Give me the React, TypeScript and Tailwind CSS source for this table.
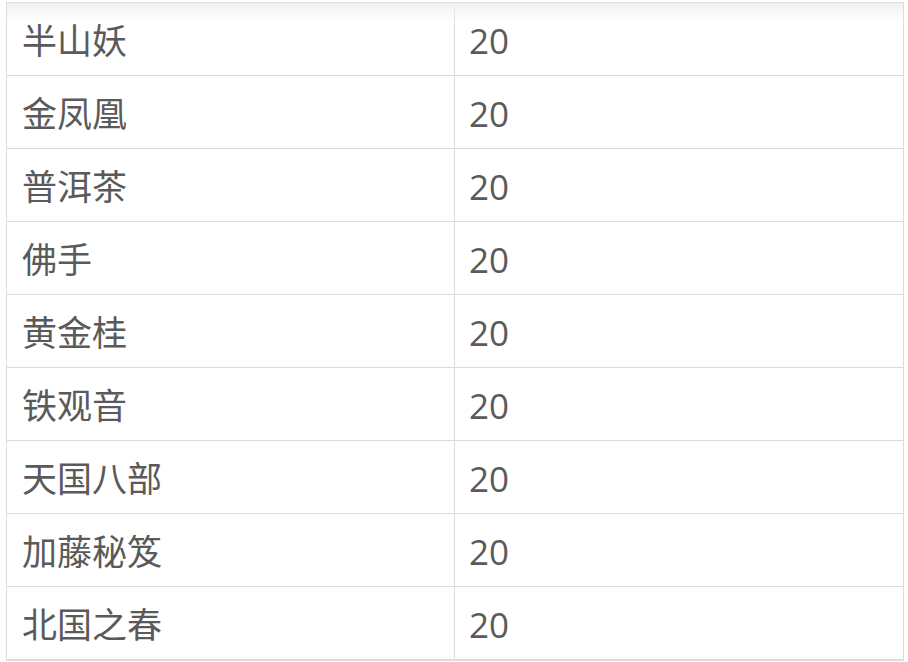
const rows = [
  '半山妖',
  '金凤凰',
  '普洱茶',
  '佛手',
  '黄金桂',
  '铁观音',
  '天国八部',
  '加藤秘笈',
  '北国之春',
]

export default function App() {
  return (
    <div className="h-[662px] w-[908px] overflow-hidden bg-white pt-[2px] pl-[6px]">
      <div
        className="relative w-[898px] border border-[#dcdcdc] text-[35px] text-[#5a5a5a]"
        style={{ fontFamily: '"Open Sans", "Noto Sans CJK SC", sans-serif' }}
      >
        {/* shadow under the header that sits above */}
        <div className="pointer-events-none absolute left-0 right-0 top-0 h-[18px] bg-gradient-to-b from-[#f0f0f0] to-white/0" />
        {rows.map((name) => (
          <div key={name} className="grid h-[73px] grid-cols-[448px_1fr] border-b border-[#dcdcdc]">
            <div className="flex items-center border-r border-[#dcdcdc] pl-[15px] pt-[2px] leading-none">
              {name}
            </div>
            <div className="flex items-center pl-[14px] pt-[2px] leading-none">20</div>
          </div>
        ))}
      </div>
    </div>
  )
}
